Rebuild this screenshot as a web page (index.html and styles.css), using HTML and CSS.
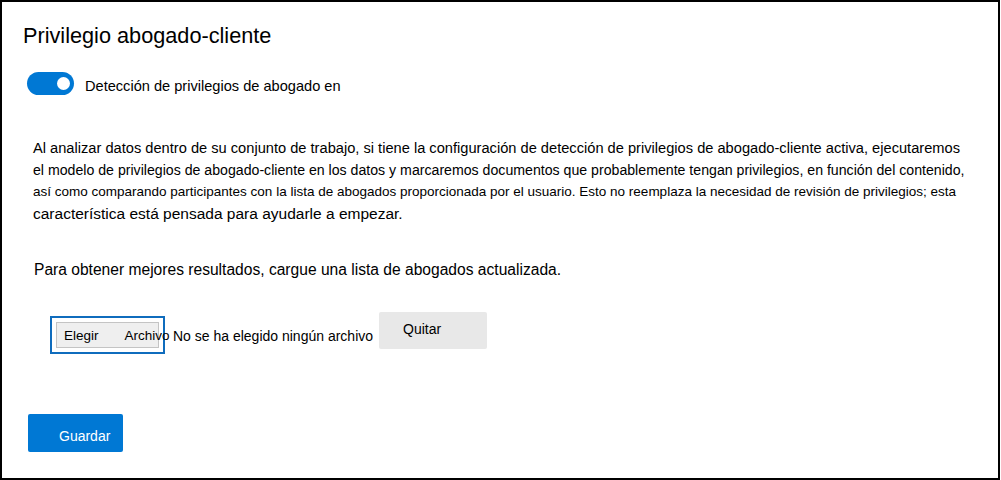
FILE: index.html
```html
<!DOCTYPE html>
<html lang="es">
<head>
<meta charset="utf-8">
<title>Privilegio abogado-cliente</title>
<link rel="stylesheet" href="styles.css">
</head>
<body>
<main class="panel">
  <h1 class="title">Privilegio abogado-cliente</h1>

  <div class="toggle-row">
    <span class="toggle" role="switch" aria-checked="true"><span class="thumb"></span></span>
    <span class="toggle-label">Detección de privilegios de abogado en</span>
  </div>

  <p class="desc">
    <span class="line l1">Al analizar datos dentro de su conjunto de trabajo, si tiene la configuración de detección de privilegios de abogado-cliente activa, ejecutaremos</span>
    <span class="line l2">el modelo de privilegios de abogado-cliente en los datos y marcaremos documentos que probablemente tengan privilegios, en función del contenido,</span>
    <span class="line l3">así como comparando participantes con la lista de abogados proporcionada por el usuario. Esto no reemplaza la necesidad de revisión de privilegios; esta</span>
    <span class="line l4">característica está pensada para ayudarle a empezar.</span>
  </p>

  <p class="hint">Para obtener mejores resultados, cargue una lista de abogados actualizada.</p>

  <div class="file-row">
    <div class="file-focus">
      <span class="file-btn"><span>Elegir</span><span>Archivo</span></span>
    </div>
    <span class="file-name">No se ha elegido ningún archivo</span>
    <button class="btn-remove" type="button">Quitar</button>
  </div>

  <button class="btn-save" type="button">Guardar</button>
</main>
</body>
</html>
```

FILE: styles.css
```css
* { box-sizing: border-box; }

html, body {
  margin: 0;
  padding: 0;
  background: #fff;
}

body {
  font-family: "Liberation Sans", Arial, sans-serif;
  color: #000;
}

.panel {
  width: 1000px;
  height: 480px;
  border: 2px solid #000;
  padding: 20px 0 0 21px;
}

.title {
  margin: 0;
  font-size: 21.7px;
  line-height: 28px;
  font-weight: normal;
}

.toggle-row {
  display: flex;
  align-items: flex-start;
  margin: 22px 0 0 4px;
}

.toggle {
  width: 47px;
  height: 23px;
  border-radius: 12px;
  background: #0078d4;
  display: flex;
  align-items: center;
  justify-content: flex-end;
  padding-right: 4px;
  flex: none;
}

.thumb {
  width: 13px;
  height: 13px;
  border-radius: 50%;
  background: #fff;
}

.toggle-label {
  margin: 3px 0 0 11px;
  font-size: 14.6px;
  line-height: 23px;
}

.desc {
  margin: 39px 0 0 10px;
}

.line {
  display: block;
  white-space: nowrap;
  line-height: 22px;
}

.l1 { font-size: 14.65px; }
.l2 { font-size: 14.15px; }
.l3 { font-size: 13.5px; }
.l4 { font-size: 15.5px; }

.hint {
  margin: 34px 0 0 11px;
  font-size: 15.6px;
  line-height: 22px;
}

.file-row {
  display: flex;
  align-items: flex-start;
  margin: 31px 0 0 27px;
}

.file-focus {
  margin-top: 4px;
  width: 115px;
  height: 38px;
  border: 2px solid #0f6cbd;
  padding: 4px;
  flex: none;
}

.file-btn {
  display: flex;
  gap: 26px;
  width: 103px;
  height: 26px;
  border: 1px solid #c4c4c4;
  background: #efefef;
  padding: 2px 0 0 7px;
  font-size: 13.5px;
  line-height: 22px;
  white-space: nowrap;
}

.file-name {
  margin: 13px 0 0 8px;
  font-size: 14px;
  line-height: 22px;
  white-space: nowrap;
}

.btn-remove {
  margin-left: 6px;
  width: 108px;
  height: 37px;
  border: none;
  border-radius: 2px;
  background: #e8e8e8;
  color: #000;
  font-family: inherit;
  font-size: 14px;
  line-height: 22px;
  text-align: left;
  padding: 0 0 4px 24px;
}

.btn-save {
  display: block;
  margin: 60px 0 0 5px;
  width: 95px;
  height: 38px;
  border: none;
  border-radius: 2px;
  background: #0078d4;
  color: #fff;
  font-family: inherit;
  font-size: 14px;
  line-height: 22px;
  text-align: left;
  padding: 6px 0 0 31px;
}
```
